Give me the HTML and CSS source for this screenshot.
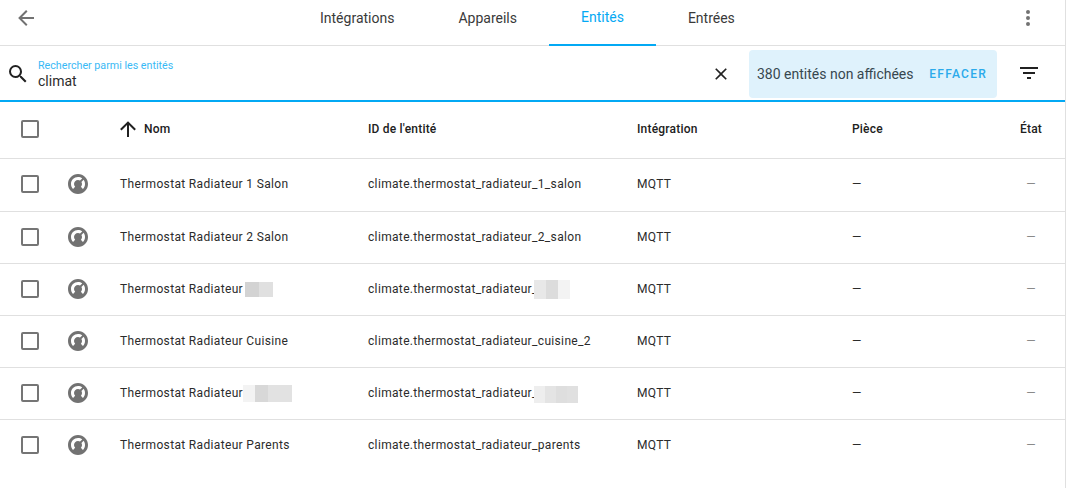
FILE: index.html
```html
<!DOCTYPE html>
<html lang="fr">
<head>
<meta charset="utf-8">
<title>Entités</title>
<link rel="stylesheet" href="styles.css">
</head>
<body>
<svg class="defs" width="0" height="0"><defs>
<symbol id="thermostat" viewBox="0 0 24 24"><path fill-rule="evenodd" d="M12 2C6.47 2 2 6.47 2 12C2 17.53 6.47 22 12 22C17.53 22 22 17.53 22 12C22 6.47 17.53 2 12 2ZM16.95 16.95L14.83 14.83C15.55 14.1 16 13.1 16 12C16 11.26 15.79 10.57 15.43 10L17.6 7.81C18.5 8.95 19 10.41 19 12C19 13.93 18.22 15.68 16.95 16.95ZM12 5C13.59 5 15.05 5.53 16.22 6.4L14 8.6C13.4 8.2 12.72 8 12 8C9.79 8 8 9.79 8 12C8 13.1 8.45 14.1 9.17 14.83L7.05 16.95C5.78 15.68 5 13.93 5 12C5 8.13 8.13 5 12 5Z"/></symbol>
</defs></svg>
<main class="page">
  <header class="topbar">
    <button class="icon-btn back" aria-label="Retour"><svg viewBox="0 0 24 24"><path d="M20 11v2H8l5.5 5.5-1.42 1.42L4.16 12l7.92-7.92L13.5 5.5 8 11h12z"/></svg></button>
    <nav class="tabs">
      <a class="tab">Intégrations</a>
      <a class="tab">Appareils</a>
      <a class="tab active">Entités</a>
      <a class="tab">Entrées</a>
    </nav>
    <button class="icon-btn more" aria-label="Menu"><svg viewBox="0 0 24 24"><path d="M12 16a2 2 0 1 1 0 4 2 2 0 0 1 0-4m0-6a2 2 0 1 1 0 4 2 2 0 0 1 0-4m0-6a2 2 0 1 1 0 4 2 2 0 0 1 0-4z"/></svg></button>
  </header>

  <section class="searchbar">
    <svg class="search-icon" viewBox="0 0 24 24"><path d="M9.5 3a6.5 6.5 0 0 1 6.5 6.5c0 1.61-.59 3.09-1.56 4.23l.27.27h.79l5 5-1.5 1.5-5-5v-.79l-.27-.27A6.52 6.52 0 0 1 9.5 16a6.5 6.5 0 0 1 0-13m0 2C7 5 5 7 5 9.5S7 14 9.5 14 14 12 14 9.5 12 5 9.5 5z"/></svg>
    <div class="field">
      <span class="field-label">Rechercher parmi les entités</span>
      <span class="field-value">climat</span>
    </div>
    <svg class="clear-icon" viewBox="0 0 24 24"><path d="M19 6.41 17.59 5 12 10.59 6.41 5 5 6.41 10.59 12 5 17.59 6.41 19 12 13.41 17.59 19 19 17.59 13.41 12 19 6.41z"/></svg>
    <div class="notice">
      <span class="notice-text">380 entités non affichées</span>
      <span class="notice-action">EFFACER</span>
    </div>
    <svg class="filter-icon" viewBox="0 0 24 24"><path d="M6 13h12v-2H6m-3-5v2h18V6M10 18h4v-2h-4v2z"/></svg>
  </section>

  <section class="table">
    <div class="row head">
      <span class="check"></span>
      <span class="cell-icon"></span>
      <span class="name"><svg class="sort" viewBox="0 0 24 24"><path d="M13 20h-2V8l-5.5 5.5-1.42-1.42L12 4.16l7.92 7.92-1.42 1.42L13 8v12z"/></svg>Nom</span>
      <span class="id">ID de l'entité</span>
      <span class="integ">Intégration</span>
      <span class="room">Pièce</span>
      <span class="state">État</span>
    </div>
    <div class="row first">
      <span class="check"></span>
      <span class="cell-icon"><svg><use href="#thermostat"/></svg></span>
      <span class="name">Thermostat Radiateur 1 Salon</span>
      <span class="id">climate.thermostat_radiateur_1_salon</span>
      <span class="integ">MQTT</span>
      <span class="room">—</span>
      <span class="state">—</span>
    </div>
    <div class="row">
      <span class="check"></span>
      <span class="cell-icon"><svg><use href="#thermostat"/></svg></span>
      <span class="name">Thermostat Radiateur 2 Salon</span>
      <span class="id">climate.thermostat_radiateur_2_salon</span>
      <span class="integ">MQTT</span>
      <span class="room">—</span>
      <span class="state">—</span>
    </div>
    <div class="row">
      <span class="check"></span>
      <span class="cell-icon"><svg><use href="#thermostat"/></svg></span>
      <span class="name">Thermostat Radiateur<span class="blur blur-n3"><i class="b-w14 c-d3"></i><i class="b-w14 c-e0"></i></span></span>
      <span class="id">climate.thermostat_radiateur_<span class="blur blur-i3"><i class="b-w12 c-e8"></i><i class="b-w12 c-dc"></i><i class="b-w12 c-f3"></i></span></span>
      <span class="integ">MQTT</span>
      <span class="room">—</span>
      <span class="state">—</span>
    </div>
    <div class="row">
      <span class="check"></span>
      <span class="cell-icon"><svg><use href="#thermostat"/></svg></span>
      <span class="name">Thermostat Radiateur Cuisine</span>
      <span class="id">climate.thermostat_radiateur_cuisine_2</span>
      <span class="integ">MQTT</span>
      <span class="room">—</span>
      <span class="state">—</span>
    </div>
    <div class="row">
      <span class="check"></span>
      <span class="cell-icon"><svg><use href="#thermostat"/></svg></span>
      <span class="name">Thermostat Radiateur<span class="blur blur-n5"><i class="b-w12 c-f3"></i><i class="b-w13 c-d8"></i><i class="b-w24 c-e2"></i></span></span>
      <span class="id">climate.thermostat_radiateur_<span class="blur blur-i5"><i class="b-w11 c-ee"></i><i class="b-w11 c-e4"></i><i class="b-w11 c-de"></i><i class="b-w11 c-e0"></i></span></span>
      <span class="integ">MQTT</span>
      <span class="room">—</span>
      <span class="state">—</span>
    </div>
    <div class="row last">
      <span class="check"></span>
      <span class="cell-icon"><svg><use href="#thermostat"/></svg></span>
      <span class="name">Thermostat Radiateur Parents</span>
      <span class="id">climate.thermostat_radiateur_parents</span>
      <span class="integ">MQTT</span>
      <span class="room">—</span>
      <span class="state">—</span>
    </div>
  </section>
</main>
</body>
</html>
```
FILE: styles.css
```css
* { box-sizing: border-box; }
html, body { margin: 0; height: 100%; background: #fff; overflow: hidden; }
body { font-family: Roboto, "Liberation Sans", sans-serif; color: #212121; }
.defs { display: block; height: 0; }
.page { width: 1066px; height: 488px; border-right: 1px solid #e0e0e0; }

.topbar { display: flex; height: 46px; border-bottom: 1px solid #e0e0e0; }
.icon-btn { border: 0; padding: 0; background: none; display: flex; height: 24px; }
.icon-btn svg { width: 24px; height: 24px; fill: #727272; }
.back { margin: 6px 0 0 14px; }
.tabs { display: flex; margin-left: 250px; height: 46px; }
.tab { display: block; height: 46px; padding: 9px 32px 0; font-size: 14px; line-height: 18px; color: #3a3a3a; }
.tab.active { color: #03a9f4; padding-top: 8px; border-bottom: 2px solid #03a9f4; }
.more { margin: 6px 25px 0 auto; }

.searchbar { display: flex; align-items: flex-start; height: 56px; border-bottom: 2px solid #03a9f4; }
.search-icon { width: 24px; height: 24px; fill: #212121; margin: 16px 0 0 6px; flex: none; }
.field { width: 676px; margin-left: 8px; display: flex; flex-direction: column; flex: none; }
.field-label { font-size: 10.7px; line-height: 12px; margin-top: 14px; color: #03a9f4; opacity: .8; }
.field-value { font-size: 14px; line-height: 17px; margin-top: 1px; color: #2c2c2c; }
.clear-icon { width: 20px; height: 20px; fill: #212121; margin: 18px 0 0 -3px; flex: none; }
.notice { display: flex; align-items: center; width: 248px; height: 48px; margin: 4px 0 0 18px; padding: 0 10px 0 8px; background: #dff2fc; border-radius: 4px; flex: none; }
.notice-text { font-size: 14px; color: #37474f; }
.notice-action { margin-left: auto; font-size: 12px; font-weight: 500; letter-spacing: 1.25px; color: #2baaeb; }
.filter-icon { width: 24px; height: 24px; fill: #212121; margin: 15px 0 0 20px; flex: none; }

.row { display: grid; grid-template-columns: 45px 54px 248px 269px 215px 168px 22px; padding: 0 0 2px 21px; align-items: center; height: 52px; border-bottom: 1px solid #e0e0e0; font-size: 12px; letter-spacing: 0.34px; color: #2b2b2b; white-space: nowrap; }
.row.head { height: 57px; font-weight: 500; letter-spacing: 0.2px; color: #212121; }
.row.first { height: 53px; padding-bottom: 2px; }
.row.last { border-bottom: 0; }
.check { width: 18px; height: 18px; border: 2px solid #757575; border-radius: 2px; }
.cell-icon { height: 24px; }
.cell-icon svg { width: 24px; height: 24px; fill: #727272; display: block; }
.name { display: flex; align-items: center; }
.id { display: flex; align-items: center; }
.sort { width: 24px; height: 24px; margin-left: -4px; margin-right: 4px; fill: #212121; flex: none; }
.state { text-align: center; }
.row:not(.head) .state { color: #8a8a8a; }

.blur { display: flex; }
.blur i { display: block; height: 100%; }
.blur-n3 { height: 15px; margin-left: 2px; margin-top: 2px; }
.blur-n5 { height: 17px; margin-top: 2px; }
.blur-i3 { height: 19px; margin: 2px 0 0 -4px; }
.blur-i5 { height: 17px; margin: 3px 0 0 -4px; }
.b-w11 { width: 11px; }
.b-w12 { width: 12px; }
.b-w13 { width: 13px; }
.b-w14 { width: 14px; }
.b-w24 { width: 24px; }
.c-d3 { background: #d3d3d3; }
.c-d8 { background: #d8d8d8; }
.c-dc { background: #dcdcdc; }
.c-de { background: #dedede; }
.c-e0 { background: #e0e0e0; }
.c-e2 { background: #e2e2e2; }
.c-e4 { background: #e4e4e4; }
.c-e8 { background: #e8e8e8; }
.c-ee { background: #eeeeee; }
.c-f3 { background: #f3f3f3; }
```
